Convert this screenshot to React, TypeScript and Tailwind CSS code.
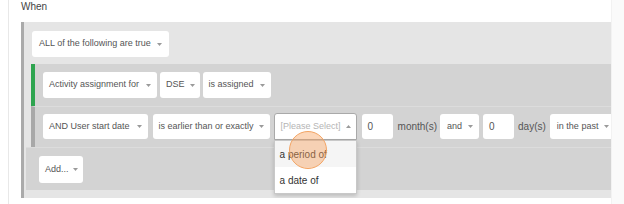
function Caret({ up = false }: { up?: boolean }) {
  return (
    <svg width="5" height="3" viewBox="0 0 5 3" className="shrink-0">
      {up ? <path d="M0 3 L2.5 0 L5 3 Z" fill="#9a9a9a" /> : <path d="M0 0 L5 0 L2.5 3 Z" fill="#9a9a9a" />}
    </svg>
  );
}

function Pick({ label, h = 'h-[26px]', cls = 'pl-[6px] pr-[6px] gap-[7px]' }: { label: string; h?: string; cls?: string }) {
  return (
    <div className={`${h} ${cls} shrink-0 flex items-center bg-white rounded-[3px] text-[9px] text-[#555] whitespace-nowrap`}>
      <span>{label}</span>
      <Caret />
    </div>
  );
}

function NumBox() {
  return (
    <div className="h-[25px] w-[31px] shrink-0 flex items-center pl-[6px] bg-white rounded-[3px] text-[10px] text-[#555]">0</div>
  );
}

export default function App() {
  return (
    <div className="w-[624px] h-[204px] bg-white flex overflow-hidden font-['Liberation_Sans',Arial,sans-serif]">
      <div className="w-[8px] shrink-0" />
      <div className="w-px shrink-0 bg-[#e8e8e8]" />
      <div className="w-[602px] shrink-0 pl-[12px]">
        <div className="h-[22px] pt-[1px] text-[10px] leading-[12px] text-[#444]">When</div>

        <div className="h-[176px] border-l-[3px] border-[#aaaaaa] bg-[#e5e5e5] pt-[9px] pb-[8px] overflow-hidden">
          <div className="pl-[8px] flex">
            <Pick label="ALL of the following are true" cls="pl-[7px] pr-[7px] gap-[6px]" />
          </div>

          <div className="mt-[7px] ml-[7px]">
            <div className="h-[42px] border-l-4 border-[#2ea44f] bg-[#d3d3d3] pl-[8px] pt-[8px] flex gap-[3px]">
              <Pick label="Activity assignment for" />
              <Pick label="DSE" cls="pl-[6px] pr-[5px] gap-[5px]" />
              <Pick label="is assigned" cls="pl-[6px] pr-[6px] gap-[6px]" />
            </div>

            <div className="h-[41px] border-t border-[#dcdcdc] border-l-4 border-l-[#a8a8a8] bg-[#d3d3d3] pl-[8px] pt-[7px] flex items-start">
              <Pick label="AND User start date" h="h-[25px]" cls="pl-[6px] pr-[6px] gap-[7px]" />
              <div className="ml-[5px]">
                <Pick label="is earlier than or exactly" h="h-[25px]" cls="pl-[6px] pr-[6px] gap-[5px]" />
              </div>
              <div className="ml-[4px] relative">
                <div className="h-[27px] -mt-[1px] w-[83px] flex items-center gap-[5px] pl-[6px] bg-white border border-[#a9a9a9] rounded-t-[3px] text-[9px] text-[#b5b5b5] whitespace-nowrap">
                  <span>[Please Select]</span>
                  <Caret up />
                </div>
                <div className="absolute left-0 top-[26px] w-[83px] bg-white border border-[#c8c8c8] shadow-[0_2px_4px_rgba(0,0,0,0.18)] z-10 text-[10px] text-[#333]">
                  <div className="h-[26px] flex items-center pl-[5px] bg-[#f5f5f5]">a period of</div>
                  <div className="h-[26px] flex items-center pl-[5px]">a date of</div>
                </div>
                <div className="absolute left-[15px] top-[17px] w-[38px] h-[38px] rounded-full bg-[rgba(247,160,90,0.42)] border-[1.5px] border-[#f3a463] z-20" />
              </div>
              <div className="ml-[5px]">
                <NumBox />
              </div>
              <div className="ml-[5px] h-[25px] flex items-center text-[10px] text-[#555] shrink-0">month(s)</div>
              <div className="ml-[3px]">
                <Pick label="and" h="h-[25px]" cls="pl-[7px] pr-[6px] gap-[6px]" />
              </div>
              <div className="ml-[4px]">
                <NumBox />
              </div>
              <div className="ml-[4px] h-[25px] flex items-center text-[10px] text-[#555] shrink-0">day(s)</div>
              <div className="ml-[4px]">
                <Pick label="in the past" h="h-[25px]" cls="pl-[7px] pr-[6px] gap-[6px]" />
              </div>
            </div>
          </div>

          <div className="ml-[2px] h-[43px] border-t border-[#dcdcdc] bg-[#d3d3d3] pl-[13px] pt-[8px] flex">
            <Pick label="Add..." h="h-[27px]" cls="pl-[6px] pr-[5px] gap-[4px]" />
          </div>
        </div>
      </div>
      <div className="flex-1 bg-[#fafafa] border-l border-[#f2f2f2]" />
    </div>
  );
}
